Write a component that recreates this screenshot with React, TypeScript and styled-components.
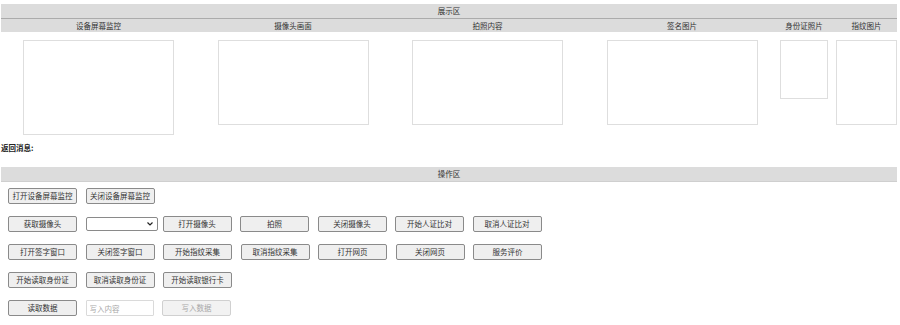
import styled, { createGlobalStyle } from "styled-components";

const GlobalStyle = createGlobalStyle`
  body {
    margin: 0;
    background: #fff;
    font-family: "Noto Sans CJK SC", "Noto Sans", sans-serif;
    color: #333;
  }
`;

const Page = styled.div`
  width: 900px;
  padding-top: 4px;
`;

const Section = styled.div`
  margin-left: 1px;
  width: 896px;
`;

const Bar = styled.div<{ line: string }>`
  height: 14px;
  line-height: 14px;
  background: #dcdcdc;
  border-bottom: 1px solid ${(p) => p.line};
  text-align: center;
  font-size: 7.5px;
  color: #333;
`;

const HeadRow = styled.div`
  display: grid;
  grid-template-columns: 195px 194px 195px 194px 50px 68px;
  height: 13px;
  line-height: 13px;
  background: #dcdcdc;
  font-size: 7.5px;
`;

const HeadCell = styled.div<{ shift?: number }>`
  text-align: center;
  padding-left: ${(p) => p.shift || 0}px;
`;

const ImageRow = styled.div`
  display: grid;
  grid-template-columns: 195px 194px 195px 194px 50px 68px;
  align-items: start;
  padding-top: 8px;
`;

const ImageCell = styled.div<{ shift?: number }>`
  display: flex;
  justify-content: center;
  padding-left: ${(p) => p.shift || 0}px;
`;

const Frame = styled.div<{ w: number; h: number }>`
  width: ${(p) => p.w}px;
  height: ${(p) => p.h}px;
  box-sizing: border-box;
  border: 1px solid #dedede;
  background: #fff;
`;

const Message = styled.div`
  margin: 7px 0 0 1px;
  height: 12px;
  line-height: 12px;
  font-size: 7.5px;
  font-weight: bold;
  color: #222;
`;

const OpSection = styled(Section)`
  margin-top: 13px;
`;

const Controls = styled.div`
  padding: 6px 0 0 8px;
  display: flex;
  flex-direction: column;
  gap: 12px;
`;

const Row = styled.div`
  display: flex;
  gap: 8.5px;
  height: 16px;
  align-items: center;
`;

const Btn = styled.button`
  flex: none;
  width: 69px;
  height: 16px;
  padding: 0;
  box-sizing: border-box;
  border: 1px solid #8a8a8a;
  border-radius: 2px;
  background: #efefef;
  color: #333;
  font-family: inherit;
  font-size: 7.5px;
  line-height: 14px;

  &:disabled {
    border-color: #d0d0d0;
    background: #f2f2f2;
    color: #a8a8a8;
  }
`;

const SelectWrap = styled.div`
  position: relative;
  flex: none;
  width: 72px;
  height: 14px;
  margin-right: -3.5px;
`;

const Select = styled.select`
  display: block;
  appearance: none;
  width: 100%;
  height: 100%;
  margin: 0;
  box-sizing: border-box;
  border: 1px solid #8a8a8a;
  border-radius: 2px;
  background: #fff;
  font-size: 7.5px;
`;

const Chevron = styled.svg`
  position: absolute;
  right: 5px;
  top: 5px;
  pointer-events: none;
`;

const TextInput = styled.input`
  flex: none;
  width: 68px;
  height: 16px;
  margin: 0;
  box-sizing: border-box;
  border: 1px solid #dadada;
  border-radius: 1px;
  padding: 0 3px;
  font-family: inherit;
  font-size: 7.5px;
  color: #333;

  &::placeholder {
    color: #a8a8a8;
  }
`;

const heads = [
  { t: "设备屏幕监控" },
  { t: "摄像头画面" },
  { t: "拍照内容" },
  { t: "签名图片" },
  { t: "身份证照片" },
  { t: "指纹图片", shift: 7 },
];

const frames = [
  { w: 151, h: 95 },
  { w: 151, h: 85 },
  { w: 151, h: 85 },
  { w: 151, h: 85 },
  { w: 48, h: 59 },
  { w: 61, h: 85, shift: 7 },
];

export default function App() {
  return (
    <Page>
      <GlobalStyle />
      <Section>
        <Bar line="#ababab">展示区</Bar>
        <HeadRow>
          {heads.map((h) => (
            <HeadCell key={h.t} shift={h.shift}>
              {h.t}
            </HeadCell>
          ))}
        </HeadRow>
        <ImageRow>
          {frames.map((f, i) => (
            <ImageCell key={i} shift={f.shift}>
              <Frame w={f.w} h={f.h} />
            </ImageCell>
          ))}
        </ImageRow>
      </Section>
      <Message>返回消息:</Message>
      <OpSection>
        <Bar line="#cfcfcf">操作区</Bar>
      </OpSection>
      <Controls>
        <Row>
          <Btn>打开设备屏幕监控</Btn>
          <Btn>关闭设备屏幕监控</Btn>
        </Row>
        <Row>
          <Btn>获取摄像头</Btn>
          <SelectWrap>
            <Select />
            <Chevron width="6" height="4" viewBox="0 0 6 4">
              <path d="M0.5 0.5 L3 3 L5.5 0.5" fill="none" stroke="#222" strokeWidth="1.2" />
            </Chevron>
          </SelectWrap>
          <Btn>打开摄像头</Btn>
          <Btn>拍照</Btn>
          <Btn>关闭摄像头</Btn>
          <Btn>开始人证比对</Btn>
          <Btn>取消人证比对</Btn>
        </Row>
        <Row>
          <Btn>打开签字窗口</Btn>
          <Btn>关闭签字窗口</Btn>
          <Btn>开始指纹采集</Btn>
          <Btn>取消指纹采集</Btn>
          <Btn>打开网页</Btn>
          <Btn>关闭网页</Btn>
          <Btn>服务评价</Btn>
        </Row>
        <Row>
          <Btn>开始读取身份证</Btn>
          <Btn>取消读取身份证</Btn>
          <Btn>开始读取银行卡</Btn>
        </Row>
        <Row>
          <Btn>读取数据</Btn>
          <TextInput placeholder="写入内容" />
          <Btn disabled>写入数据</Btn>
        </Row>
      </Controls>
    </Page>
  );
}
